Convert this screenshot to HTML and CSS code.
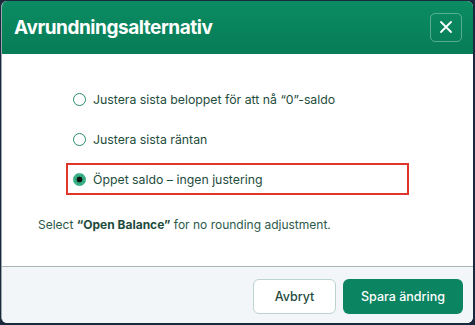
FILE: index.html
```html
<!DOCTYPE html>
<html lang="sv">
<head>
<meta charset="utf-8">
<link rel="stylesheet" href="styles.css">
</head>
<body>
<div class="modal">
  <header class="modal-header">
    <h1 class="title">Avrundningsalternativ</h1>
    <button class="close" aria-label="Stäng">
      <svg width="14" height="14" viewBox="0 0 14 14"><path d="M2 2 L12 12 M12 2 L2 12" stroke="#fff" stroke-width="1.8" stroke-linecap="round"/></svg>
    </button>
  </header>
  <main class="modal-body">
    <div class="options">
      <label class="option"><span class="radio"></span><span>Justera sista beloppet för att nå “0”-saldo</span></label>
      <label class="option"><span class="radio"></span><span>Justera sista räntan</span></label>
      <label class="option selected"><span class="radio checked"></span><span>Öppet saldo – ingen justering</span></label>
    </div>
    <p class="hint">Select <strong>“Open Balance”</strong> for no rounding adjustment.</p>
  </main>
  <footer class="modal-footer">
    <button class="btn btn-secondary">Avbryt</button>
    <button class="btn btn-primary">Spara ändring</button>
  </footer>
</div>
</body>
</html>
```

FILE: styles.css
```css
* { box-sizing: border-box; }
html, body { height: 100%; }
body {
  margin: 0;
  background: #1a2a3c;
  font-family: Inter, "Noto Sans", sans-serif;
  padding: 1px 2px 2px 1px;
}
.modal {
  height: 100%;
  background: #fff;
  border-radius: 6px;
  overflow: hidden;
  display: flex;
  flex-direction: column;
  border-left: 1px solid #9aa6ae;
}
.modal-header {
  height: 53px;
  flex: none;
  background: linear-gradient(180deg, #0b8c62 0%, #077c57 100%);
  display: flex;
  align-items: center;
  justify-content: space-between;
  padding: 0 11px 1px 12px;
}
.title {
  margin: 0;
  color: #fff;
  font-size: 19px;
  font-weight: 700;
  letter-spacing: -0.45px;
}
.close {
  width: 32px;
  height: 29px;
  border: 1px solid rgba(255,255,255,0.32);
  border-radius: 5px;
  background: transparent;
  display: flex;
  align-items: center;
  justify-content: center;
  padding: 0;
}
.modal-body {
  flex: 1;
  padding: 29px 36px 0 36px;
}
.options {
  display: flex;
  flex-direction: column;
  gap: 8px;
  padding-left: 28px;
  width: 371px;
}
.option {
  display: flex;
  align-items: center;
  gap: 7px;
  height: 32px;
  padding-left: 5px;
  color: #1e4c3c;
  font-size: 12.3px;
  border: 2px solid transparent;
}
.option.selected {
  border-color: #e0352b;
}
.radio {
  width: 13px;
  height: 13px;
  border-radius: 50%;
  border: 1.3px solid #2a8a6a;
  background: #fff;
  flex: none;
}
.radio.checked {
  border: 2px dotted #4cb58f;
  background: radial-gradient(circle, #111 0 2.6px, #2faa7d 3.2px 100%);
}
.hint {
  margin: 22px 0 0 0;
  color: #2b5a4a;
  font-size: 12px;
}
.hint strong { color: #1e4c3c; }
.modal-footer {
  height: 57px;
  flex: none;
  background: #f3f6f9;
  border-top: 1px solid #a8b4b4;
  display: flex;
  justify-content: flex-end;
  align-items: center;
  gap: 7px;
  padding: 2px 10px 0 0;
}
.btn {
  height: 35px;
  border-radius: 6px;
  font-family: Inter, "Noto Sans", sans-serif;
  font-size: 12.5px;
  font-weight: 500;
}
.btn-secondary {
  width: 83px;
  background: #fff;
  border: 1px solid #bcd3cf;
  color: #244a3e;
}
.btn-primary {
  width: 120px;
  background: #0a8461;
  border: none;
  color: #fff;
}
```
